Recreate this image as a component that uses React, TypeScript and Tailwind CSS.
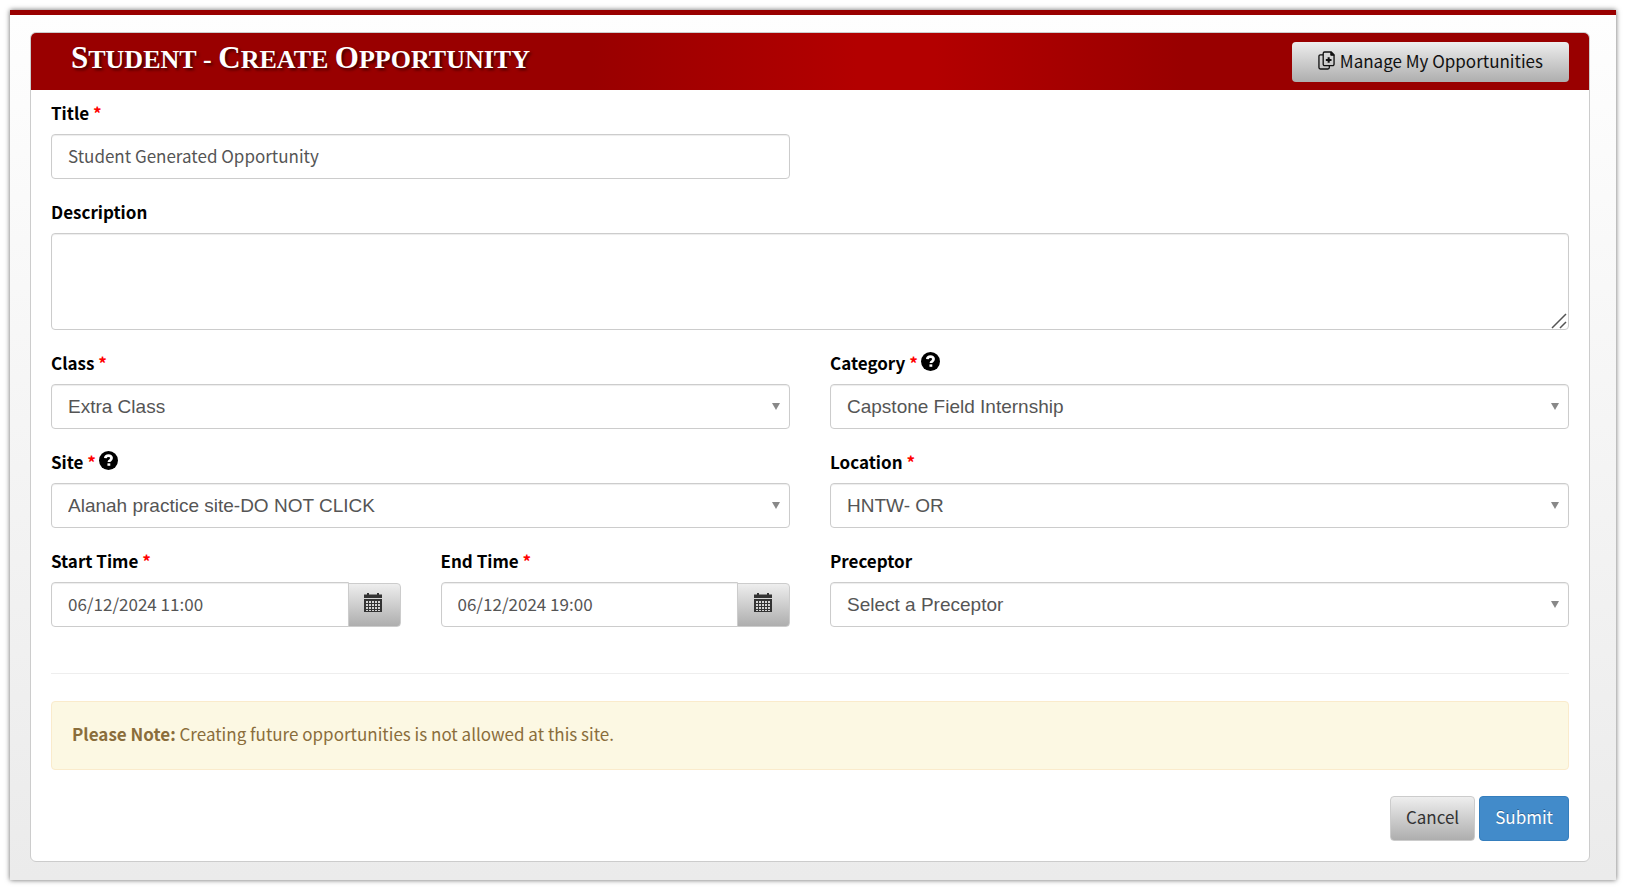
import React from "react"
import type { ReactNode } from "react"

const inputClass =
  "h-[45px] w-full min-w-0 rounded border border-[#ccc] bg-white px-4 pb-[2px] text-[17px] text-[#555] shadow-[inset_0_1px_1px_rgba(0,0,0,0.075)] outline-none"

interface FieldProps {
  id: string
  label: string
  required?: boolean
  help?: boolean
  children: ReactNode
}

function HelpIcon() {
  return (
    <svg viewBox="0 0 18 18" className="h-[19px] w-[19px]" aria-hidden="true">
      <circle cx="9" cy="9" r="9" fill="#000" />
      <path
        d="M6 6.800C6.200 5 7.300 4.400 9 4.400c1.800 0 2.900.9 2.900 2.300 0 1.100-.6 1.600-1.300 2.100-.8.5-1.200.8-1.200 1.700"
        fill="none"
        stroke="#fff"
        strokeWidth="2.600"
      />
      <rect x="8" y="11.700" width="2.700" height="2.300" fill="#fff" />
    </svg>
  )
}

function CalendarIcon() {
  return (
    <svg viewBox="0 0 18 19" className="h-[19px] w-[18px]" aria-hidden="true">
      <path d="M0 1.500h3V0h2v1.500h8V0h2v1.500h3v3.500H0z" fill="#333" />
      <rect y="6" width="18" height="13" fill="#333" />
      <g fill="#d4d4d4">
        {[8, 11, 14].map((y) =>
          [2, 5, 8, 11, 14].map((x) => <rect key={`${x}-${y}`} x={x} y={y} width="2" height="2" />)
        )}
        {[2, 5, 8, 11, 14].map((x) => (
          <rect key={x} x={x} y="17" width="2" height="1" />
        ))}
      </g>
    </svg>
  )
}

function CopyPlusIcon() {
  return (
    <svg viewBox="0 0 18 20" className="h-[19px] w-[17px]" fill="none" stroke="#111" aria-hidden="true">
      <path d="M7 1h7l3 3v10a1.500 1.500 0 0 1-1.500 1.500H7A1.500 1.500 0 0 1 5.500 14V2.500A1.500 1.500 0 0 1 7 1z" strokeWidth="1.400" />
      <path d="M13.500 1v3.500H17z" fill="#111" />
      <path d="M5.500 4H2.500A1.500 1.500 0 0 0 1 5.500v12A1.500 1.500 0 0 0 2.500 19h8a1.500 1.500 0 0 0 1.500-1.500v-2" strokeWidth="1.400" />
      <path d="M11.300 6.500v6M8.300 9.500h6" strokeWidth="2.200" />
    </svg>
  )
}

function Field({ id, label, required, help, children }: FieldProps) {
  return (
    <div>
      <div className="mb-[9px] flex h-[25px] items-center gap-[3px]">
        <label htmlFor={id} className="leading-[25px] font-bold text-black">
          {label} {required && <span className="text-[#f00]">*</span>}
        </label>
        {help && (
          <span className="pb-[2px]">
            <HelpIcon />
          </span>
        )}
      </div>
      {children}
    </div>
  )
}

function SelectBox({ id, value }: { id: string; value: string }) {
  return (
    <div className="relative">
      <select
        id={id}
        className="block h-[45px] w-full appearance-none rounded border border-[#ccc] bg-white px-4 font-['Liberation_Sans',Arial,sans-serif] text-[19px] text-[#555] shadow-[inset_0_1px_1px_rgba(0,0,0,0.075)] outline-none"
      >
        <option>{value}</option>
      </select>
      <svg viewBox="0 0 8 7" className="pointer-events-none absolute top-[19px] right-[10px] h-[7px] w-2" aria-hidden="true">
        <path d="M0 0h8L4 7z" fill="#888" />
      </svg>
    </div>
  )
}

function DateBox({ id, value }: { id: string; value: string }) {
  return (
    <div className="flex items-center">
      <input id={id} type="text" defaultValue={value} className={`${inputClass} flex-1 rounded-r-none`} />
      <button
        type="button"
        aria-label="Open calendar"
        className="-ml-px flex h-11 w-[53px] items-center justify-center rounded-r border border-[#ccc] bg-linear-to-b from-[#eee] to-[#aeaeae] pr-[2px] pb-[5px]"
      >
        <CalendarIcon />
      </button>
    </div>
  )
}

export default function App() {
  return (
    <div className="bg-white p-[10px] font-['Noto_Sans_CJK_SC',sans-serif] text-[17px] leading-6">
      <div className="border-t-[5px] border-[#900] bg-linear-to-b from-[#fefefe] to-[#ebebeb] pt-[17px] pr-[26px] pb-[18px] pl-5 shadow-[0_0_5px_rgba(0,0,0,0.6)]">
        <main className="rounded-md border border-[#ccc] bg-white">
          {/* Header */}
          <header className="flex h-[57px] items-center justify-between rounded-t-[5px] bg-[linear-gradient(to_right,#900_36%,#b30000_53%,#b30000_58%,#900_74%)] pr-5 pl-10">
            <h1 className="pb-[5px] font-['Liberation_Serif',serif] text-[26px] leading-9 font-bold text-white uppercase [text-shadow:2px_2px_3px_rgba(0,0,0,0.6)]">
              <span className="inline-block first-letter:text-[31px]">Student</span> -{" "}
              <span className="inline-block first-letter:text-[31px]">Create</span>{" "}
              <span className="inline-block first-letter:text-[31px]">Opportunity</span>
            </h1>
            <button
              type="button"
              className="flex h-10 items-center gap-[5px] rounded bg-linear-to-b from-[#eee] to-[#aeaeae] px-[26px] pb-[2px] text-[#111]"
            >
              <CopyPlusIcon />
              Manage My Opportunities
            </button>
          </header>

          {/* Form */}
          <form className="px-5 pt-[10px] pb-5">
            <div className="grid grid-cols-2 gap-x-10 gap-y-5">
              <Field id="title" label="Title" required>
                <input id="title" type="text" defaultValue="Student Generated Opportunity" className={inputClass} />
              </Field>
              <div className="col-span-2">
                <Field id="description" label="Description">
                  <div className="relative">
                    <textarea
                      id="description"
                      className="block h-[97px] w-full resize-none rounded border border-[#ccc] bg-white px-4 py-2 text-[#555] shadow-[inset_0_1px_1px_rgba(0,0,0,0.075)] outline-none"
                    />
                    <svg
                      viewBox="0 0 16 16"
                      className="pointer-events-none absolute right-[2px] bottom-[1px] h-4 w-4"
                      stroke="#555"
                      strokeWidth="1.500"
                      aria-hidden="true"
                    >
                      <path d="M1 15 15 1M9 15l6-6" />
                    </svg>
                  </div>
                </Field>
              </div>
              <Field id="class" label="Class" required>
                <SelectBox id="class" value="Extra Class" />
              </Field>
              <Field id="category" label="Category" required help>
                <SelectBox id="category" value="Capstone Field Internship" />
              </Field>
              <Field id="site" label="Site" required help>
                <SelectBox id="site" value="Alanah practice site-DO NOT CLICK" />
              </Field>
              <Field id="location" label="Location" required>
                <SelectBox id="location" value="HNTW- OR" />
              </Field>
              <div className="grid grid-cols-2 gap-x-10">
                <Field id="start" label="Start Time" required>
                  <DateBox id="start" value="06/12/2024 11:00" />
                </Field>
                <Field id="end" label="End Time" required>
                  <DateBox id="end" value="06/12/2024 19:00" />
                </Field>
              </div>
              <Field id="preceptor" label="Preceptor">
                <SelectBox id="preceptor" value="Select a Preceptor" />
              </Field>
            </div>

            <hr className="mt-[46px] mb-[27px] border-[#eee]" />

            <div className="flex h-[69px] items-center rounded border border-[#faebcc] bg-[#fcf8e3] px-5 pb-1 text-[#8a6d3b]">
              <p>
                <strong>Please Note:</strong> Creating future opportunities is not allowed at this site.
              </p>
            </div>

            {/* Actions */}
            <div className="mt-[26px] flex justify-end gap-1">
              <button
                type="button"
                className="h-[45px] rounded border border-[#ccc] bg-linear-to-b from-[#eee] to-[#aeaeae] px-[15px] pb-[3px] text-[#333]"
              >
                Cancel
              </button>
              <button
                type="submit"
                className="h-[45px] rounded border border-[#357ebd] bg-[#428bca] px-[15px] pb-[3px] text-white [text-shadow:0_-1px_0_rgba(0,0,0,0.3)]"
              >
                Submit
              </button>
            </div>
          </form>
        </main>
      </div>
    </div>
  )
}
